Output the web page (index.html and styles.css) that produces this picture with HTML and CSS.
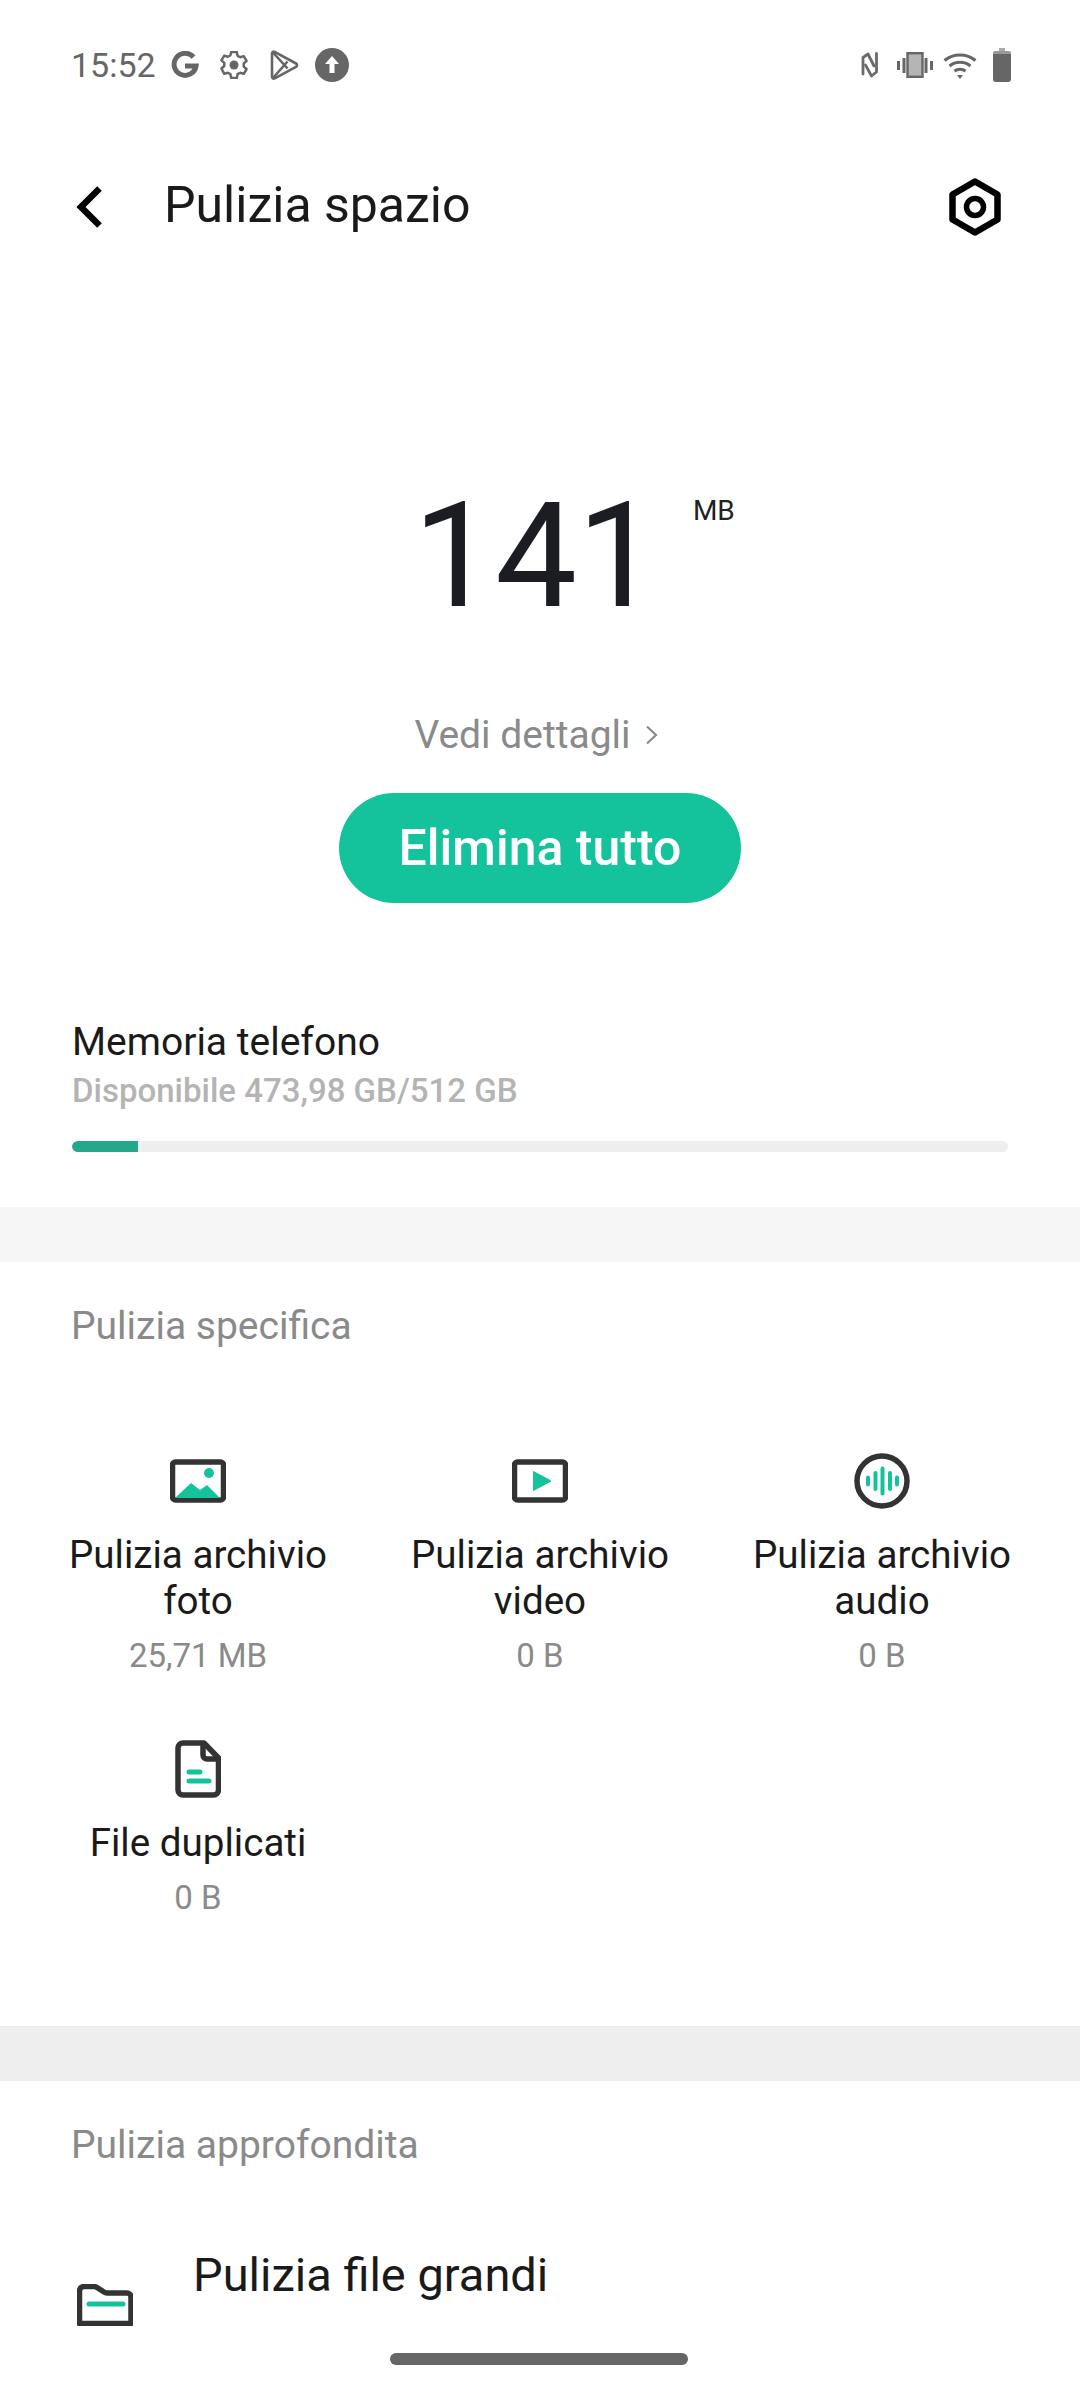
FILE: index.html
```html
<!DOCTYPE html>
<html lang="it">
<head>
    <meta charset="UTF-8">
    <meta name="viewport" content="width=device-width, initial-scale=1.0">
    <title>Pulizia spazio</title>
    <link rel="stylesheet" href="styles.css">
</head>
<body>
    <div class="status-bar">
        <div class="status-left">
            <span class="time">15:52</span>
            <svg class="st-g" width="28" height="28" viewBox="0 0 28 28" fill="none" stroke="#666" stroke-width="5"><path d="M22.500 6.200A11 11 0 1 0 25 15h-11"/></svg>
            <svg class="st-gear" width="28" height="28" viewBox="1.500 1.500 25 25" fill="none" stroke="#666"><path d="M11.500 2.500h5l.7 3.300 2.300 1.300 3.200-1 2.500 4.300-2.500 2.200v2.800l2.500 2.200-2.500 4.300-3.200-1-2.300 1.300-.7 3.300h-5l-.7-3.300-2.300-1.300-3.200 1L2.800 17.100l2.500-2.200v-2.800L2.800 9.900l2.500-4.300 3.200 1 2.300-1.300z" stroke-width="2.200" stroke-linejoin="round"/><circle cx="14" cy="14" r="4" fill="#666" stroke="none"/></svg>
            <svg class="st-play" width="30" height="32" viewBox="0 0 30 32" fill="none" stroke="#666" stroke-width="2.600" stroke-linejoin="round"><path d="M3 4.500c0-1.500 1.400-2.300 2.700-1.600L27 14.500c1.400.8 1.400 2.500 0 3.300L5.700 29.400C4.400 30.100 3 29.300 3 27.800z"/><path d="M4 3.500l14.500 16M4 29l14.500-16.500"/></svg>
            <svg class="st-up" width="34" height="34" viewBox="0 0 34 34"><circle cx="17" cy="17" r="17" fill="#666"/><path d="M17 8l7 8h-4.500v9h-5v-9H10z" fill="#fff"/></svg>
        </div>
        <div class="status-right">
            <svg width="18" height="28" viewBox="0 0 18 28" fill="none" stroke="#6b6b6b" stroke-width="2.800" stroke-linejoin="round" stroke-linecap="round"><path d="M2 23V6.500L7 3l6 12"/><path d="M15.500 2.500V21l-5 4-6-11"/></svg>
            <svg class="st-vib" width="38" height="26" viewBox="0 0 38 26"><path d="M1 9h3v9H1zM34 9h3v9h-3zM6.500 6h3v15h-3zM28.500 6h3v15h-3z" fill="#666"/><rect x="11.500" y="1.200" width="15" height="23.600" fill="#b5b5b5" stroke="#666" stroke-width="2.400"/></svg>
            <svg class="st-wifi" width="34" height="28" viewBox="0 0 34 28" fill="none" stroke="#666" stroke-width="3"><path d="M1.500 9.500c9-7.500 22-7.500 31 0M6.500 15c6-5 15-5 21 0M11.500 20c3-2.500 8-2.500 11 0"/><path d="M14 24h6l-3 4z" fill="#666" stroke="none"/></svg>
            <svg class="st-bat" width="18" height="34" viewBox="0 0 18 34"><path d="M6 0h6v3H6z" fill="#aaa"/><path d="M2 3h14a2 2 0 0 1 2 2v2H0V5a2 2 0 0 1 2-2z" fill="#999"/><path d="M0 6h18v25a3 3 0 0 1-3 3H3a3 3 0 0 1-3-3z" fill="#666"/></svg>
        </div>
    </div>

    <div class="toolbar">
        <svg class="back-icon" width="26" height="42" viewBox="0 0 26 42" fill="none" stroke="#000" stroke-width="6.500"><path d="M23.500 2.500L5 21l18.500 18.500"/></svg>
        <h1 class="title">Pulizia spazio</h1>
        <svg class="settings-icon" width="52" height="58" viewBox="0 0 52 58" fill="none" stroke="#000"><path d="M26 3.500l22.500 13v25L26 54.500l-22.500-13v-25z" stroke-width="6.500" stroke-linejoin="round"/><circle cx="26" cy="29" r="8.500" stroke-width="5.500"/></svg>
    </div>

    <div class="summary">
        <div class="size"><span class="size-value">141</span><span class="size-unit">MB</span></div>
        <div class="details">Vedi dettagli
            <svg width="13" height="22" viewBox="0 0 13 22" fill="none" stroke="#8a8a8a" stroke-width="2.200"><path d="M2 2.500l9 8.500-9 8.500"/></svg>
        </div>
        <button class="clear-btn">Elimina tutto</button>
    </div>

    <div class="storage">
        <div class="storage-title">Memoria telefono</div>
        <div class="storage-sub">Disponibile 473,98 GB/512 GB</div>
        <div class="bar"><div class="bar-fill" style="width: 7%"></div></div>
    </div>

    <div class="band"></div>

    <section class="specific">
        <div class="section-title">Pulizia specifica</div>
        <div class="grid">
            <div class="item">
                <svg class="item-icon" width="56" height="56" viewBox="0 0 56 56"><rect x="2.500" y="9" width="51" height="38" rx="3" fill="none" stroke="#333" stroke-width="5.500"/><circle cx="39" cy="20" r="5" fill="#14c29c"/><path d="M5 45l16-15 9 7 7-5 13 13z" fill="#14c29c"/></svg>
                <div class="item-label">Pulizia archivio foto</div>
                <div class="item-size">25,71 MB</div>
            </div>
            <div class="item">
                <svg class="item-icon" width="56" height="56" viewBox="0 0 56 56"><rect x="2.500" y="9" width="51" height="38" rx="3" fill="none" stroke="#333" stroke-width="5.500"/><path d="M21.500 18.500L39 28 21.500 37.500z" fill="#14c29c" stroke="#14c29c" stroke-linejoin="round"/></svg>
                <div class="item-label">Pulizia archivio video</div>
                <div class="item-size">0 B</div>
            </div>
            <div class="item">
                <svg class="item-icon" width="56" height="56" viewBox="0 0 56 56" fill="none"><circle cx="28" cy="28" r="25" stroke="#333" stroke-width="5.500"/><path d="M14 24.500v7M21.500 20v16M28.500 15.500v25M36 20v16M43 24.500v7" stroke="#14c29c" stroke-width="4" stroke-linecap="round"/></svg>
                <div class="item-label">Pulizia archivio audio</div>
                <div class="item-size">0 B</div>
            </div>
            <div class="item">
                <svg class="item-icon" width="46" height="58" viewBox="0 0 46 58" fill="none"><path d="M8 3h21l14.500 15v32a5 5 0 0 1-5 5H8a5 5 0 0 1-5-5V8a5 5 0 0 1 5-5z" stroke="#333" stroke-width="5.500" stroke-linejoin="round"/><path d="M28 4v11a4 4 0 0 0 4 4h11" stroke="#333" stroke-width="5.500"/><path d="M14 32h11M14 41h20" stroke="#14c29c" stroke-width="5" stroke-linecap="round"/></svg>
                <div class="item-label">File duplicati</div>
                <div class="item-size">0 B</div>
            </div>
        </div>
    </section>

    <div class="band band-dark"></div>

    <section class="deep">
        <div class="section-title">Pulizia approfondita</div>
        <div class="row">
            <svg class="row-icon" width="56" height="42" viewBox="0 0 56 42" fill="none"><path d="M2.500 39.500V7a4.500 4.500 0 0 1 4.500-4.500h10a6 6 0 0 1 3 1l7 4.500a6 6 0 0 0 3 1h20a4 4 0 0 1 4 4v26.500z" stroke="#333" stroke-width="5.500" stroke-linejoin="round"/><path d="M12 20h34" stroke="#14c29c" stroke-width="5" stroke-linecap="round"/></svg>
            <div class="row-title">Pulizia file grandi</div>
        </div>
    </section>

    <div class="home-bar"></div>
</body>
</html>
```

FILE: styles.css
```css
body {
    margin: 0;
    width: 1080px;
    height: 2392px;
    overflow: hidden;
    position: relative;
    background-color: #ffffff;
    font-family: Roboto, sans-serif;
    color: #1a1a1a;
}

.status-bar {
    height: 128px;
    padding: 2px 69px 0 71px;
    display: flex;
    justify-content: space-between;
    align-items: center;
    box-sizing: border-box;
}

.status-left, .status-right {
    display: flex;
    align-items: center;
}

.time {
    font-size: 34px;
    color: #666;
    margin-right: 15px;
}

.st-gear { margin-left: 21px; }
.st-play { margin-left: 21px; }
.st-up { margin-left: 16px; }
.st-vib { margin-left: 17px; }
.st-wifi { margin-left: 9px; }
.st-bat { margin-left: 16px; }

.toolbar {
    height: 152px;
    padding: 2px 79px 0 76px;
    display: flex;
    align-items: center;
    box-sizing: border-box;
}

.back-icon {
    flex: none;
    margin-top: 3px;
}

.settings-icon { margin-top: 3px; }

.title {
    flex: 1;
    margin: 0 0 0 62px;
    font-size: 50px;
    font-weight: 400;
    color: #1a1a1a;
}

.summary {
    display: flex;
    flex-direction: column;
    align-items: center;
}

.size {
    margin-top: 192px;
    margin-right: 8px;
    height: 170px;
    position: relative;
    line-height: 170px;
}

.size-value {
    display: block;
    font-size: 146px;
    font-weight: 400;
    color: #1c1d22;
}

.size-unit {
    position: absolute;
    left: 280px;
    top: 25px;
    line-height: 28px;
    font-size: 28px;
    color: #222;
}

.details {
    margin-top: 68px;
    margin-right: 8px;
    font-size: 39px;
    line-height: 50px;
    color: #8a8a8a;
    display: flex;
    align-items: center;
    gap: 14px;
}

.clear-btn {
    margin-top: 33px;
    width: 402px;
    height: 110px;
    border: none;
    border-radius: 55px;
    background-color: #14c29c;
    color: #ffffff;
    font-family: Roboto, sans-serif;
    font-size: 50px;
    font-weight: 500;
}

.storage {
    margin-top: 110px;
    padding: 0 72px;
}

.storage-title {
    font-size: 39px;
    line-height: 58px;
    color: #1a1a1a;
}

.storage-sub {
    font-size: 33px;
    font-weight: 500;
    line-height: 40px;
    color: #b4b4b4;
}

.bar {
    margin-top: 30px;
    height: 11px;
    border-radius: 6px;
    background-color: #eeeeee;
    overflow: hidden;
}

.bar-fill {
    height: 100%;
    background-color: #23a88b;
    border-radius: 6px 0 0 6px;
}

.band {
    margin-top: 55px;
    height: 55px;
    background-color: #f6f6f6;
}

.band-dark {
    margin-top: 0;
    background-color: #eeeeee;
}

.section-title {
    font-size: 39px;
    line-height: 50px;
    color: #8a8a8a;
    padding-left: 71px;
}

.specific {
    height: 764px;
    padding-top: 39px;
    box-sizing: border-box;
}

.grid {
    margin-top: 101px;
    padding: 0 27px;
    display: grid;
    grid-template-columns: repeat(3, 342px);
    row-gap: 62px;
}

.item {
    display: flex;
    flex-direction: column;
    align-items: center;
    text-align: center;
}

.item-icon {
    height: 58px;
    margin-bottom: 22px;
}

.item-label {
    width: 300px;
    font-size: 38.6px;
    line-height: 46px;
    color: #1a1a1a;
}

.item-size {
    margin-top: 10px;
    font-size: 33px;
    line-height: 44px;
    color: #8a8a8a;
}

.deep {
    padding-top: 39px;
}

.row {
    margin-top: 76px;
    padding-left: 77px;
    display: flex;
    align-items: flex-start;
}

.row-icon {
    margin-top: 38px;
    flex: none;
}

.row-title {
    margin-left: 60px;
    font-size: 47px;
    line-height: 58px;
    color: #1a1a1a;
}

.home-bar {
    position: absolute;
    left: 390px;
    bottom: 27px;
    width: 298px;
    height: 12px;
    border-radius: 6px;
    background-color: #666666;
}
```
